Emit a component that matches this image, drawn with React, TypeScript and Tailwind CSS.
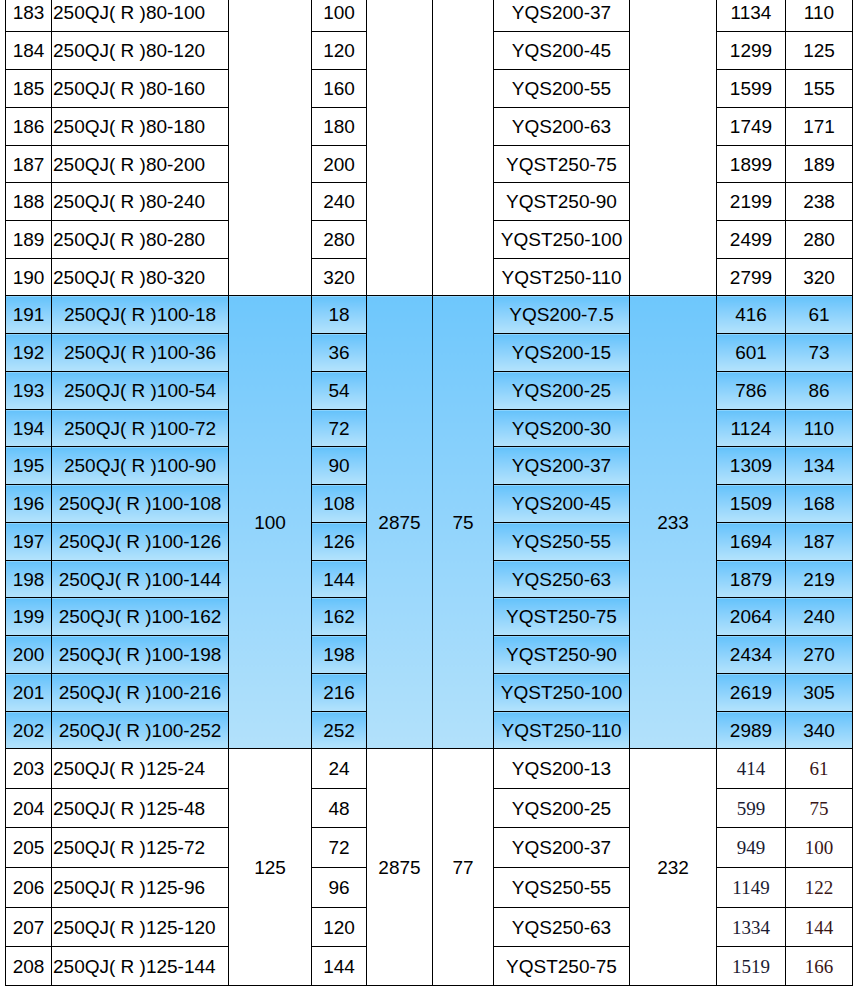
type Row = {
  no: number
  model: string
  head: number
  motor: string
  weight: number
  power: number
  h: number
}

const topRows: Row[] = [
  { no: 183, model: '250QJ( R )80-100', head: 100, motor: 'YQS200-37', weight: 1134, power: 110, h: 38 },
  { no: 184, model: '250QJ( R )80-120', head: 120, motor: 'YQS200-45', weight: 1299, power: 125, h: 38 },
  { no: 185, model: '250QJ( R )80-160', head: 160, motor: 'YQS200-55', weight: 1599, power: 155, h: 38 },
  { no: 186, model: '250QJ( R )80-180', head: 180, motor: 'YQS200-63', weight: 1749, power: 171, h: 38 },
  { no: 187, model: '250QJ( R )80-200', head: 200, motor: 'YQST250-75', weight: 1899, power: 189, h: 37 },
  { no: 188, model: '250QJ( R )80-240', head: 240, motor: 'YQST250-90', weight: 2199, power: 238, h: 38 },
  { no: 189, model: '250QJ( R )80-280', head: 280, motor: 'YQST250-100', weight: 2499, power: 280, h: 38 },
  { no: 190, model: '250QJ( R )80-320', head: 320, motor: 'YQST250-110', weight: 2799, power: 320, h: 37 },
]

const blueRows: Row[] = [
  { no: 191, model: '250QJ( R )100-18', head: 18, motor: 'YQS200-7.5', weight: 416, power: 61, h: 38 },
  { no: 192, model: '250QJ( R )100-36', head: 36, motor: 'YQS200-15', weight: 601, power: 73, h: 38 },
  { no: 193, model: '250QJ( R )100-54', head: 54, motor: 'YQS200-25', weight: 786, power: 86, h: 38 },
  { no: 194, model: '250QJ( R )100-72', head: 72, motor: 'YQS200-30', weight: 1124, power: 110, h: 37 },
  { no: 195, model: '250QJ( R )100-90', head: 90, motor: 'YQS200-37', weight: 1309, power: 134, h: 38 },
  { no: 196, model: '250QJ( R )100-108', head: 108, motor: 'YQS200-45', weight: 1509, power: 168, h: 38 },
  { no: 197, model: '250QJ( R )100-126', head: 126, motor: 'YQS250-55', weight: 1694, power: 187, h: 38 },
  { no: 198, model: '250QJ( R )100-144', head: 144, motor: 'YQS250-63', weight: 1879, power: 219, h: 37 },
  { no: 199, model: '250QJ( R )100-162', head: 162, motor: 'YQST250-75', weight: 2064, power: 240, h: 38 },
  { no: 200, model: '250QJ( R )100-198', head: 198, motor: 'YQST250-90', weight: 2434, power: 270, h: 38 },
  { no: 201, model: '250QJ( R )100-216', head: 216, motor: 'YQST250-100', weight: 2619, power: 305, h: 38 },
  { no: 202, model: '250QJ( R )100-252', head: 252, motor: 'YQST250-110', weight: 2989, power: 340, h: 37 },
]

const bottomRows: Row[] = [
  { no: 203, model: '250QJ( R )125-24', head: 24, motor: 'YQS200-13', weight: 414, power: 61, h: 40 },
  { no: 204, model: '250QJ( R )125-48', head: 48, motor: 'YQS200-25', weight: 599, power: 75, h: 39 },
  { no: 205, model: '250QJ( R )125-72', head: 72, motor: 'YQS200-37', weight: 949, power: 100, h: 40 },
  { no: 206, model: '250QJ( R )125-96', head: 96, motor: 'YQS250-55', weight: 1149, power: 122, h: 40 },
  { no: 207, model: '250QJ( R )125-120', head: 120, motor: 'YQS250-63', weight: 1334, power: 144, h: 39 },
  { no: 208, model: '250QJ( R )125-144', head: 144, motor: 'YQST250-75', weight: 1519, power: 166, h: 39 },
]

const td = 'border border-black p-0 text-center align-middle'
const rowBlue = 'bg-gradient-to-b from-[#64c2fb] to-[#b4e3fc]'
const mergedBlue = 'bg-gradient-to-b from-[#6ec7fc] to-[#b2e1fb]'

export default function App() {
  return (
    <div className="w-[855px] h-[991px] overflow-hidden bg-white">
      <table
        className="ml-[5px] -mt-[7px] w-[847px] table-fixed border-collapse text-[19px] leading-none text-black"
        style={{ fontFamily: '"Liberation Sans", Arial, sans-serif' }}
      >
        <colgroup>
          <col className="w-[46px]" />
          <col className="w-[177px]" />
          <col className="w-[83px]" />
          <col className="w-[55px]" />
          <col className="w-[66px]" />
          <col className="w-[61px]" />
          <col className="w-[136px]" />
          <col className="w-[87px]" />
          <col className="w-[69px]" />
          <col className="w-[67px]" />
        </colgroup>
        <tbody>
          {/* tail of the 80 m³/h group, merged cells begin above the fold */}
          {topRows.map((r, i) => (
            <tr key={r.no} style={{ height: r.h }}>
              <td className={td}>{r.no}</td>
              <td className={`${td} !text-left pl-px`}>{r.model}</td>
              {i === 0 && <td className={td} rowSpan={8} />}
              <td className={td}>{r.head}</td>
              {i === 0 && <td className={td} rowSpan={8} />}
              {i === 0 && <td className={td} rowSpan={8} />}
              <td className={td}>{r.motor}</td>
              {i === 0 && <td className={td} rowSpan={8} />}
              <td className={td}>{r.weight}</td>
              <td className={td}>{r.power}</td>
            </tr>
          ))}

          {/* highlighted 100 m³/h group */}
          {blueRows.map((r, i) => (
            <tr key={r.no} style={{ height: r.h }}>
              <td className={`${td} ${rowBlue}`}>{r.no}</td>
              <td className={`${td} ${rowBlue}`}>{r.model}</td>
              {i === 0 && (
                <td className={`${td} ${mergedBlue}`} rowSpan={12}>
                  100
                </td>
              )}
              <td className={`${td} ${rowBlue}`}>{r.head}</td>
              {i === 0 && (
                <td className={`${td} ${mergedBlue}`} rowSpan={12}>
                  2875
                </td>
              )}
              {i === 0 && (
                <td className={`${td} ${mergedBlue}`} rowSpan={12}>
                  75
                </td>
              )}
              <td className={`${td} ${rowBlue}`}>{r.motor}</td>
              {i === 0 && (
                <td className={`${td} ${mergedBlue}`} rowSpan={12}>
                  233
                </td>
              )}
              <td className={`${td} ${rowBlue}`}>{r.weight}</td>
              <td className={`${td} ${rowBlue}`}>{r.power}</td>
            </tr>
          ))}

          {/* 125 m³/h group */}
          {bottomRows.map((r, i) => (
            <tr key={r.no} style={{ height: r.h }}>
              <td className={td}>{r.no}</td>
              <td className={`${td} !text-left pl-px`}>{r.model}</td>
              {i === 0 && (
                <td className={td} rowSpan={6}>
                  125
                </td>
              )}
              <td className={td}>{r.head}</td>
              {i === 0 && (
                <td className={td} rowSpan={6}>
                  2875
                </td>
              )}
              {i === 0 && (
                <td className={td} rowSpan={6}>
                  77
                </td>
              )}
              <td className={td}>{r.motor}</td>
              {i === 0 && (
                <td className={td} rowSpan={6}>
                  232
                </td>
              )}
              <td className={`${td} font-['Liberation_Serif',serif] text-[#1c1c34]`}>{r.weight}</td>
              <td className={`${td} font-['Liberation_Serif',serif] text-[#3a1616]`}>{r.power}</td>
            </tr>
          ))}
        </tbody>
      </table>
    </div>
  )
}
